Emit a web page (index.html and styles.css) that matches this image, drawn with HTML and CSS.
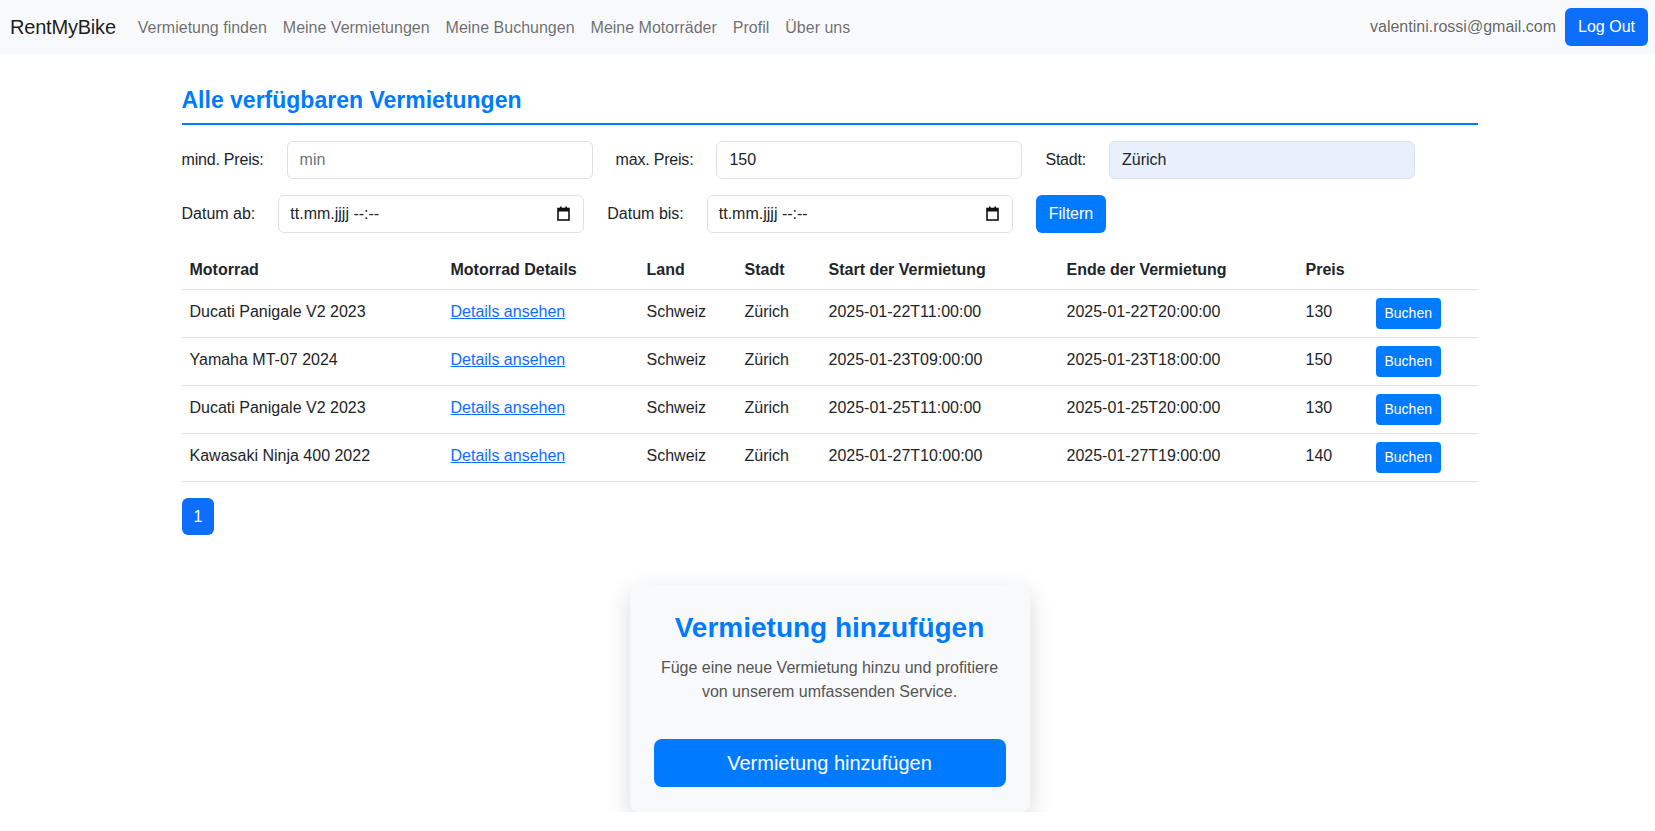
FILE: index.html
```html
<!DOCTYPE html>
<html lang="de">
<head>
<meta charset="utf-8">
<title>RentMyBike</title>
<link rel="stylesheet" href="styles.css">
</head>
<body>
<nav class="navbar">
  <a class="brand" href="#">RentMyBike</a>
  <ul class="nav-links">
    <li><a href="#">Vermietung finden</a></li>
    <li><a href="#">Meine Vermietungen</a></li>
    <li><a href="#">Meine Buchungen</a></li>
    <li><a href="#">Meine Motorräder</a></li>
    <li><a href="#">Profil</a></li>
    <li><a href="#">Über uns</a></li>
  </ul>
  <div class="nav-right">
    <span class="email">valentini.rossi@gmail.com</span>
    <button class="btn btn-primary">Log Out</button>
  </div>
</nav>

<main class="container">
  <h2 class="page-title">Alle verfügbaren Vermietungen</h2>

  <form class="filters">
    <div class="filter-row">
      <label class="field"><span class="label tight">mind. Preis:</span><input class="input" type="text" placeholder="min"></label>
      <label class="field"><span class="label tight">max. Preis:</span><input class="input" type="text" value="150"></label>
      <label class="field"><span class="label tight">Stadt:</span><input class="input autofill" type="text" value="Zürich"></label>
    </div>
    <div class="filter-row">
      <div class="field"><span class="label">Datum ab:</span>
        <div class="input date-input"><span>tt.mm.jjjj --:--</span>
          <svg class="cal" width="13" height="15" viewBox="0 0 13 15"><rect x="1" y="2.5" width="11" height="11.5" fill="none" stroke="#111" stroke-width="1.6"/><rect x="1" y="2.5" width="11" height="3" fill="#111"/><rect x="3" y="0.5" width="1.6" height="3" fill="#111"/><rect x="8.4" y="0.5" width="1.6" height="3" fill="#111"/></svg>
        </div>
      </div>
      <div class="field"><span class="label">Datum bis:</span>
        <div class="input date-input"><span>tt.mm.jjjj --:--</span>
          <svg class="cal" width="13" height="15" viewBox="0 0 13 15"><rect x="1" y="2.5" width="11" height="11.5" fill="none" stroke="#111" stroke-width="1.6"/><rect x="1" y="2.5" width="11" height="3" fill="#111"/><rect x="3" y="0.5" width="1.6" height="3" fill="#111"/><rect x="8.4" y="0.5" width="1.6" height="3" fill="#111"/></svg>
        </div>
      </div>
      <button type="button" class="btn btn-blue">Filtern</button>
    </div>
  </form>

  <table class="table">
    <colgroup>
      <col class="c1"><col class="c2"><col class="c3"><col class="c4"><col class="c5"><col class="c6"><col class="c7"><col class="c8">
    </colgroup>
    <thead>
      <tr><th>Motorrad</th><th>Motorrad Details</th><th>Land</th><th>Stadt</th><th>Start der Vermietung</th><th>Ende der Vermietung</th><th>Preis</th><th></th></tr>
    </thead>
    <tbody>
      <tr><td>Ducati Panigale V2 2023</td><td><a href="#">Details ansehen</a></td><td>Schweiz</td><td>Zürich</td><td>2025-01-22T11:00:00</td><td>2025-01-22T20:00:00</td><td>130</td><td class="action"><button class="btn btn-sm">Buchen</button></td></tr>
      <tr><td>Yamaha MT-07 2024</td><td><a href="#">Details ansehen</a></td><td>Schweiz</td><td>Zürich</td><td>2025-01-23T09:00:00</td><td>2025-01-23T18:00:00</td><td>150</td><td class="action"><button class="btn btn-sm">Buchen</button></td></tr>
      <tr><td>Ducati Panigale V2 2023</td><td><a href="#">Details ansehen</a></td><td>Schweiz</td><td>Zürich</td><td>2025-01-25T11:00:00</td><td>2025-01-25T20:00:00</td><td>130</td><td class="action"><button class="btn btn-sm">Buchen</button></td></tr>
      <tr><td>Kawasaki Ninja 400 2022</td><td><a href="#">Details ansehen</a></td><td>Schweiz</td><td>Zürich</td><td>2025-01-27T10:00:00</td><td>2025-01-27T19:00:00</td><td>140</td><td class="action"><button class="btn btn-sm">Buchen</button></td></tr>
    </tbody>
  </table>

  <ul class="pagination"><li><a class="page-link active" href="#">1</a></li></ul>

  <section class="add-wrap">
    <div class="add-card">
      <h2 class="add-title">Vermietung hinzufügen</h2>
      <p class="add-text">Füge eine neue Vermietung hinzu und profitiere von unserem umfassenden Service.</p>
      <button class="btn btn-lg">Vermietung hinzufügen</button>
    </div>
  </section>
</main>
</body>
</html>
```

FILE: styles.css
```css
* { box-sizing: border-box; }
html, body { margin: 0; padding: 0; }
body {
  font-family: "Liberation Sans", Arial, sans-serif;
  font-size: 16px;
  line-height: 1.5;
  color: #212529;
  background: #fff;
}
a { color: #0d6efd; }

.navbar {
  display: flex;
  align-items: center;
  height: 54px;
  padding: 0 7px 0 10px;
  background: #f8f9fa;
}
.brand {
  font-size: 20px;
  color: rgba(0,0,0,.9);
  text-decoration: none;
  margin-right: 14px;
  letter-spacing: -0.2px;
}
.nav-links {
  display: flex;
  list-style: none;
  margin: 0;
  padding: 0;
}
.nav-links a {
  display: block;
  padding: 9px 8px 7px;
  color: rgba(0,0,0,.58);
  text-decoration: none;
}
.nav-right {
  margin-left: auto;
  display: flex;
  align-items: center;
  gap: 9px;
}
.email { color: rgba(0,0,0,.62); }

.btn {
  font-family: inherit;
  font-size: 16px;
  line-height: 24px;
  padding: 6px 12px;
  border: 1px solid transparent;
  border-radius: 6px;
  color: #fff;
  background: #007bff;
  cursor: pointer;
}
.btn-primary { background: #0d6efd; }
.btn-blue { background: #007bff; border-radius: 6px; }

.container {
  width: 1300px;
  margin: 0 auto;
  padding: 33px 0 0 4px;
}
.page-title {
  margin: 0 0 16px;
  padding-bottom: 8px;
  font-size: 23px;
  line-height: 1.2;
  font-weight: 700;
  color: #007bff;
  border-bottom: 2px solid #007bff;
}

.filters { display: flex; flex-direction: column; gap: 16px; }
.filter-row { display: flex; align-items: center; gap: 23px; }
.field { display: flex; align-items: center; gap: 23px; }
.label { color: #212529; }
.label.tight { letter-spacing: -0.2px; }
.input {
  width: 306px;
  height: 38px;
  padding: 6px 12px;
  font-family: inherit;
  font-size: 16px;
  line-height: 24px;
  color: #212529;
  background: #fff;
  border: 1px solid #dee2e6;
  border-radius: 6px;
}
.input::placeholder { color: #6c757d; }
.autofill { background: #e8f0fe; }
.date-input {
  display: flex;
  align-items: center;
  justify-content: space-between;
  padding-left: 11px;
  padding-right: 13px;
}
.cal { display: block; }

.table {
  width: 100%;
  margin: 16px 0 16px;
  border-collapse: collapse;
  table-layout: fixed;
  vertical-align: top;
}
.c1 { width: 261px; }
.c2 { width: 196px; }
.c3 { width: 98px; }
.c4 { width: 84px; }
.c5 { width: 238px; }
.c6 { width: 239px; }
.c7 { width: 70px; }
.c8 { width: 110px; }
.table th, .table td {
  padding: 6px 8px 8px;
  text-align: left;
  border-bottom: 1px solid #dee2e6;
  white-space: nowrap;
}
.table th { font-weight: 700; padding-top: 9px; padding-bottom: 7px; }
.table td.action { padding-top: 8px; }
.btn-sm {
  font-size: 14px;
  line-height: 21px;
  padding: 4px 8px;
  border-radius: 4px;
  background: #007bff;
  display: block;
}

.pagination {
  list-style: none;
  margin: 0;
  padding: 0;
  display: flex;
}
.page-link {
  display: block;
  padding: 7px 12px 6px;
  line-height: 24px;
  border-radius: 6px;
  text-decoration: none;
}
.page-link.active { background: #0d6efd; color: #fff; }

.add-wrap {
  display: flex;
  justify-content: center;
  margin-top: 50px;
}
.add-card {
  width: 400px;
  padding: 26px 24px 25px;
  background: #f8f9fa;
  border-radius: 8px;
  box-shadow: 0 8px 24px rgba(0,0,0,.15);
  text-align: center;
}
.add-title {
  margin: 0 0 12px;
  font-size: 28px;
  line-height: 1.2;
  font-weight: 700;
  color: #007bff;
}
.add-text {
  margin: 0 0 35px;
  color: #555;
}
.btn-lg {
  width: 100%;
  font-size: 20px;
  line-height: 30px;
  padding: 8px 16px;
  border-radius: 8px;
  background: #007bff;
}
```
